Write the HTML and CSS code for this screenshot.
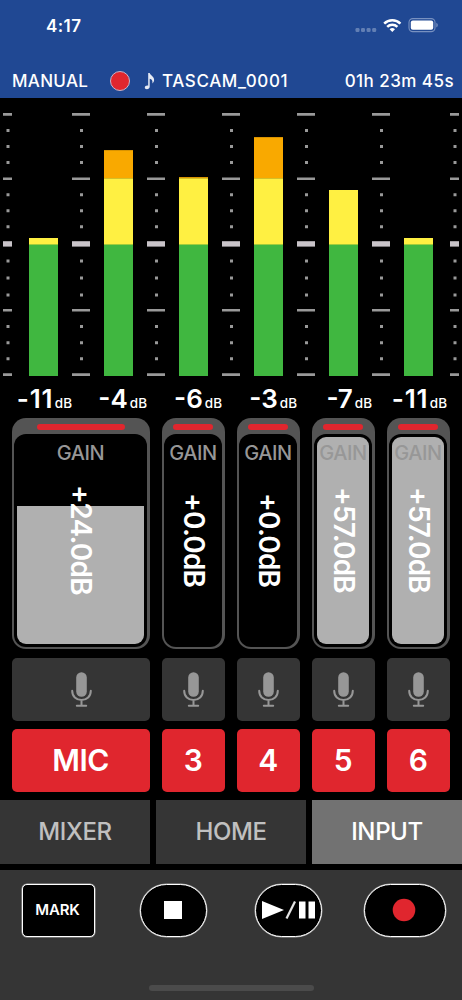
FILE: index.html
```html
<!DOCTYPE html>
<html lang="en">
<head>
<meta charset="utf-8">
<title>Recorder control</title>
<link rel="stylesheet" href="styles.css">
</head>
<body>
<svg class="defs" width="0" height="0" aria-hidden="true">
  <symbol id="scale" viewBox="0 -2 18 268">
    <path fill="#999" d="M0 3h18v2.700H0zM0 67.400h18v2.700H0zM0 198.900h18v2.700H0zM0 263.300h18v2.700H0z"/>
    <path fill="#c9c4c9" d="M0 131.200h18v5.400H0z"/>
    <path fill="#999" d="M8 19h3v3H8zM8 35h3v3H8zM8 51h3v3H8zM8 83.300h3v3H8zM8 99.200h3v3H8zM8 115.300h3v3H8zM8 149.500h3v3H8zM8 166.600h3v3H8zM8 183.600h3v3H8zM8 215h3v3H8zM8 231.300h3v3H8zM8 247.200h3v3H8z"/>
  </symbol>
  <symbol id="scale-edge" viewBox="0 -2 9 268">
    <path fill="#999" d="M0 3h9v2.700H0zM0 67.400h9v2.700H0zM0 198.900h9v2.700H0zM0 263.300h9v2.700H0z"/>
    <path fill="#c9c4c9" d="M0 131.200h9v5.400H0z"/>
    <path fill="#999" d="M3.500 19h3v3h-3zM3.500 35h3v3h-3zM3.500 51h3v3h-3zM3.500 83.300h3v3h-3zM3.500 99.200h3v3h-3zM3.500 115.300h3v3h-3zM3.500 149.500h3v3h-3zM3.500 166.600h3v3h-3zM3.500 183.600h3v3h-3zM3.500 215h3v3h-3zM3.500 231.300h3v3h-3zM3.500 247.200h3v3h-3z"/>
  </symbol>
  <symbol id="mic" viewBox="0 0 21 36">
    <rect x="5.200" y=".3" width="10.600" height="24.400" rx="5.300" fill="#979797"/>
    <path d="M1.200 18.800c0 5.600 4 9.200 9.300 9.200s9.300-3.600 9.300-9.200M10.500 28v5.500M5.800 33.800h9.400" fill="none" stroke="#979797" stroke-width="2" stroke-linecap="round"/>
  </symbol>
</svg>

<header class="header">
  <div class="status">
    <span class="clock">4:17</span>
    <svg width="84" height="16" viewBox="0 0 84 16">
      <g fill="#627fb4"><rect x="1.500" y="11" width="4" height="4" rx="1.200"/><rect x="7" y="11" width="4" height="4" rx="1.200"/><rect x="12.600" y="11" width="4" height="4" rx="1.200"/><rect x="18.200" y="11" width="4" height="4" rx="1.200"/></g>
      <g fill="none" stroke="#fff" stroke-width="2.500"><path d="M30.200 6.600a11.500 11.500 0 0 1 16.200 0"/><path d="M33.200 9.800a7.300 7.300 0 0 1 10.200 0"/></g>
      <path d="M35.600 12.300a4 4 0 0 1 5.400 0L38.300 15z" fill="#fff"/>
      <rect x="55" y="1.600" width="26" height="13" rx="3.800" fill="none" stroke="#7891c0" stroke-width="1.100"/>
      <rect x="56.800" y="3.500" width="22.400" height="9.300" rx="2" fill="#fff"/>
      <path d="M82.300 5.800q1.500.7 1.500 2.300t-1.500 2.300z" fill="#7891c0"/>
    </svg>
  </div>
  <div class="info">
    <span class="mode">MANUAL</span>
    <span class="rec-dot"></span>
    <svg class="note" width="12" height="18" viewBox="0 0 12 18">
      <path d="M4.200 1h1.500c.3 2.200 4.800 3.600 4.400 7.200-.1 1.400-.8 2.400-1.700 3.200.4-2.600-.4-4.400-2.700-4.700v8.100c0 1.600-1.300 2.400-2.800 2.400C1.600 17.200.8 16.500.8 15.600c0-1.300 1.500-2.300 3.400-1.900z" fill="#e6eaf4"/>
    </svg>
    <span class="file">TASCAM_0001</span>
    <span class="elapsed">01h 23m 45s</span>
  </div>
</header>

<main>
  <section class="meters">
    <svg class="edge"><use href="#scale-edge"/></svg>
    <div class="bar" style="height:138px"><i class="low"></i></div>
    <svg class="scale"><use href="#scale"/></svg>
    <div class="bar" style="height:226px"><i class="high"></i><i class="mid"></i><i class="low"></i></div>
    <svg class="scale"><use href="#scale"/></svg>
    <div class="bar" style="height:199px"><i class="high"></i><i class="mid"></i><i class="low"></i></div>
    <svg class="scale"><use href="#scale"/></svg>
    <div class="bar" style="height:239px"><i class="high"></i><i class="mid"></i><i class="low"></i></div>
    <svg class="scale"><use href="#scale"/></svg>
    <div class="bar" style="height:186px"><i class="low"></i></div>
    <svg class="scale"><use href="#scale"/></svg>
    <div class="bar" style="height:138px"><i class="low"></i></div>
    <svg class="edge"><use href="#scale-edge"/></svg>
  </section>
  <section class="levels">
    <div><b class="loose">-11</b><small>dB</small></div><div><b>-4</b><small>dB</small></div><div><b>-6</b><small>dB</small></div><div><b>-3</b><small>dB</small></div><div><b>-7</b><small>dB</small></div><div><b class="loose">-11</b><small>dB</small></div>
  </section>

  <section class="channels gains">
    <div class="gain wide"><i class="lamp"></i><div class="well"><div class="fill part"></div><span class="name">GAIN</span><span class="value">+24.0dB</span></div></div>
    <div class="gain"><i class="lamp"></i><div class="well"><span class="name">GAIN</span><span class="value">+0.0dB</span></div></div>
    <div class="gain"><i class="lamp"></i><div class="well"><span class="name">GAIN</span><span class="value">+0.0dB</span></div></div>
    <div class="gain"><i class="lamp"></i><div class="well"><div class="fill"></div><span class="name">GAIN</span><span class="value">+57.0dB</span></div></div>
    <div class="gain"><i class="lamp"></i><div class="well"><div class="fill"></div><span class="name">GAIN</span><span class="value">+57.0dB</span></div></div>
  </section>
  <section class="channels sources">
    <div class="key"><svg width="21" height="36"><use href="#mic"/></svg></div>
    <div class="key"><svg width="21" height="36"><use href="#mic"/></svg></div>
    <div class="key"><svg width="21" height="36"><use href="#mic"/></svg></div>
    <div class="key"><svg width="21" height="36"><use href="#mic"/></svg></div>
    <div class="key"><svg width="21" height="36"><use href="#mic"/></svg></div>
  </section>
  <section class="channels inputs">
    <div class="key armed">MIC</div><div class="key armed">3</div><div class="key armed">4</div><div class="key armed">5</div><div class="key armed">6</div>
  </section>
</main>

<nav class="tabs">
  <div class="tab">MIXER</div><div class="tab">HOME</div><div class="tab active">INPUT</div>
</nav>

<footer class="transport">
  <div class="buttons">
    <div class="btn mark">MARK</div>
    <div class="btn pill stop"><svg width="18" height="18"><path d="M0 0h18v18H0z" fill="#fff"/></svg></div>
    <div class="btn pill play"><svg width="54" height="18" viewBox="0 0 54 18"><path d="M0 0L22 9 0 18zM37 .5h6.500v17H37zM46.500 .5H53v17h-6.500z" fill="#fff"/><path d="M24.500 17.500L33 .5" stroke="#e4e4e4" stroke-width="2.200"/></svg></div>
    <div class="btn pill record"><svg width="24" height="24"><circle cx="12" cy="12" r="11.300" fill="#e0262e"/></svg></div>
  </div>
  <div class="home-bar"></div>
</footer>
</body>
</html>
```
FILE: styles.css
```css
* { box-sizing: border-box; }
body {
  margin: 0;
  width: 462px;
  height: 1000px;
  overflow: hidden;
  background: #000;
  color: #fff;
  font-family: Inter, "Liberation Sans", sans-serif;
}
svg { display: block; flex: none; }
.defs { position: absolute; }

.header { height: 98px; background: #204893; font-size: 17px; line-height: 20px; }
.status { height: 51px; padding: 16px 24px 0 46px; display: flex; justify-content: space-between; }
.clock { font-weight: 600; letter-spacing: .4px; }
.status svg { margin-top: 1px; }
.info { display: flex; align-items: center; padding: 20px 8px 0 12px; font-weight: 500; white-space: nowrap; }
.mode { width: 98px; letter-spacing: .3px; }
.rec-dot { width: 20px; height: 20px; border-radius: 50%; background: #e0262e; border: 1.500px solid #c8b4c8; }
.note { margin: 0 6px 0 14px; }
.file { letter-spacing: .62px; }
.elapsed { margin-left: auto; letter-spacing: .45px; }

.meters { height: 278px; padding: 0 3px; display: flex; align-items: flex-end; }
.scale { width: 18px; height: 268px; margin: 0 14px; }
.edge { width: 9px; height: 268px; }
.edge:first-child { margin-right: 17px; }
.edge:last-child { margin-left: 17px; }
.bar { width: 29px; display: flex; flex-direction: column; justify-content: flex-end; background: #fff042; }
.low { height: 132px; background: #40b740; border-top: 1px solid #a0cc3c; }
.high { flex: 1; background: #f9a900; border-top: 1px solid #d99300; }
.mid { height: 66px; background: #fff042; border-top: 1px solid #d4bf28; }

.levels { display: grid; grid-template-columns: repeat(6, 75px); height: 42px; margin-left: -3px; padding-top: 8px; font-size: 26px; line-height: 30px; }
.levels div { text-align: right; white-space: nowrap; }
.levels b { font-weight: 600; }
.levels .loose { letter-spacing: .8px; }
.levels small { font-size: 13.500px; font-weight: 500; margin-left: 2px; }
.levels .loose + small { margin-left: 1.500px; }

.channels { display: grid; grid-template-columns: 138px repeat(4, 63px); gap: 12px; padding: 0 12px; }
.gains { height: 231px; }
.gain { background: #545454; border-radius: 14px; padding: 6px 3px 2px 2px; display: flex; flex-direction: column; align-items: center; }
.lamp { width: 40px; height: 6px; border-radius: 3px; background: #e0262e; }
.wide .lamp { width: 88px; }
.well { width: 100%; flex: 1; margin-top: 4px; padding: 3px; border-radius: 12px; background: #000; display: grid; grid-template: 34px 1fr / 100%; }
.fill { grid-area: 1 / 1 / 3 / 2; background: #b0b0b0; border-radius: 9px; }
.fill.part { margin-top: 69px; border-radius: 0 0 9px 9px; }
.name { grid-area: 1 / 1 / 2 / 2; justify-self: center; margin: 4px 0 0; color: #979797; font-size: 20px; line-height: 24px; font-weight: 500; letter-spacing: -.4px; }
.value { grid-area: 1 / 1 / 3 / 2; place-self: center; margin: 0 0 1px 1px; writing-mode: vertical-rl; font-size: 28px; line-height: 34px; font-weight: 600; letter-spacing: -.8px; white-space: nowrap; }

.sources { margin-top: 9px; height: 63px; }
.inputs { margin-top: 8px; height: 63px; }
.key { height: 63px; border-radius: 5px; background: #353535; display: flex; align-items: center; justify-content: center; }
.armed { padding: 0 1px 1px 0; background: #e0262e; font-size: 30px; font-weight: 600; letter-spacing: -.6px; }

.tabs { display: grid; grid-template-columns: repeat(3, 150px); gap: 6px; margin-top: 8px; height: 64px; }
.tab { display: flex; align-items: center; justify-content: center; background: #353535; color: #c0c0c0; font-size: 24px; font-weight: 500; letter-spacing: -.4px; padding-bottom: 1px; }
.tab.active { background: #727272; color: #fff; }

.transport { margin-top: 6px; height: 130px; padding-top: 14px; background: #353535; }
.buttons { display: flex; padding-left: 22px; }
.btn { height: 53px; background: #000; border: 1.500px solid #fff; display: flex; align-items: center; justify-content: center; padding: 0 2px 2px 0; box-shadow: 0 0 0 .5px #aaa; }
.mark { width: 73px; border-radius: 5px; font-size: 15px; font-weight: 600; letter-spacing: -.2px; }
.pill { width: 67px; border-radius: 27px; }
.stop { margin-left: 45px; }
.play { margin-left: 48px; padding-left: 2px; }
.record { width: 82px; margin-left: 42px; }
.home-bar { width: 165px; height: 6px; margin: 48px auto 0; border-radius: 3px; background: #4b4b4b; }
```
